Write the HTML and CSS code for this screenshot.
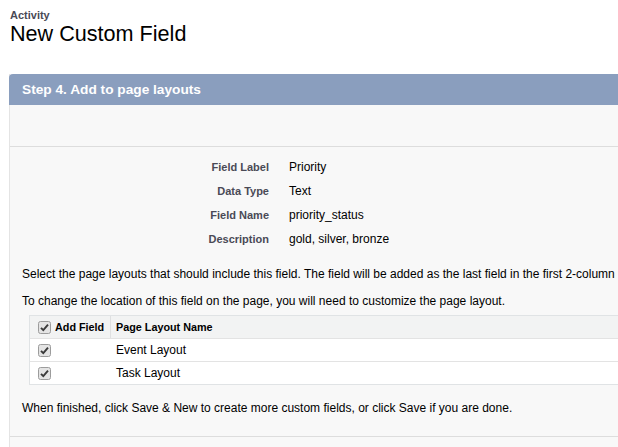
FILE: index.html
```html
<!DOCTYPE html>
<html>
<head>
<meta charset="utf-8">
<link rel="stylesheet" href="styles.css">
</head>
<body>
<div class="page-head">
  <div class="page-type">Activity</div>
  <h1 class="page-title">New Custom Field</h1>
</div>
<div class="panel">
  <div class="panel-header">Step 4. Add to page layouts</div>
  <div class="panel-blank"></div>
  <div class="panel-body">
    <div class="detail-grid">
      <div class="d-label">Field Label</div><div class="d-value">Priority</div>
      <div class="d-label">Data Type</div><div class="d-value">Text</div>
      <div class="d-label">Field Name</div><div class="d-value">priority_status</div>
      <div class="d-label">Description</div><div class="d-value">gold, silver, bronze</div>
    </div>
    <p class="note first">Select the page layouts that should include this field. The field will be added as the last field in the first 2-column section of these page layouts.</p>
    <p class="note second">To change the location of this field on the page, you will need to customize the page layout.</p>
    <div class="layout-table">
      <div class="lt-row lt-head">
        <div class="lt-c1"><span class="cb"><svg width="13" height="13" viewBox="0 0 13 13"><rect x="0.5" y="0.5" width="12" height="12" rx="2" fill="#e4e4e4" stroke="#9c9c9c"/><path d="M3 6.8 L5.3 9.2 L10 3.6" fill="none" stroke="#3a3a3a" stroke-width="1.9"/></svg></span>Add Field</div>
        <div class="lt-c2">Page Layout Name</div>
      </div>
      <div class="lt-row">
        <div class="lt-c1"><span class="cb"><svg width="13" height="13" viewBox="0 0 13 13"><rect x="0.5" y="0.5" width="12" height="12" rx="2" fill="#e4e4e4" stroke="#9c9c9c"/><path d="M3 6.8 L5.3 9.2 L10 3.6" fill="none" stroke="#3a3a3a" stroke-width="1.9"/></svg></span></div>
        <div class="lt-c2">Event Layout</div>
      </div>
      <div class="lt-row">
        <div class="lt-c1"><span class="cb"><svg width="13" height="13" viewBox="0 0 13 13"><rect x="0.5" y="0.5" width="12" height="12" rx="2" fill="#e4e4e4" stroke="#9c9c9c"/><path d="M3 6.8 L5.3 9.2 L10 3.6" fill="none" stroke="#3a3a3a" stroke-width="1.9"/></svg></span></div>
        <div class="lt-c2">Task Layout</div>
      </div>
    </div>
    <p class="note finish">When finished, click Save &amp; New to create more custom fields, or click Save if you are done.</p>
  </div>
  <div class="panel-foot"></div>
</div>
</body>
</html>
```
FILE: styles.css
```css
html, body {
  margin: 0;
  padding: 0;
  background: #ffffff;
  font-family: "Liberation Sans", Arial, sans-serif;
  color: #000;
  overflow: hidden;
}
.page-head {
  padding: 9px 0 0 10px;
}
.page-type {
  font-size: 11px;
  line-height: 13px;
  font-weight: bold;
  color: #4a4a56;
}
.page-title {
  margin: 0;
  font-size: 21.6px;
  line-height: 24px;
  font-weight: normal;
  color: #000;
}
.panel {
  margin: 28px 0 0 9px;
  width: 760px;
  background: #f8f8f8;
  border-left: 1px solid #e4e4e4;
}
.panel-header {
  height: 31px;
  line-height: 31px;
  margin-left: -1px;
  padding-left: 13px;
  background: #8a9ebe;
  border-radius: 4px 4px 0 0;
  color: #fff;
  font-weight: bold;
  font-size: 13.7px;
}
.panel-blank {
  height: 41px;
  border-bottom: 1px solid #dddddd;
}
.panel-body {
  padding: 8px 0 20px 0;
  border-bottom: 1px solid #dddddd;
}
.detail-grid {
  display: grid;
  grid-template-columns: 259px auto;
  grid-auto-rows: 24px;
  column-gap: 20px;
  align-items: center;
}
.d-label {
  text-align: right;
  font-size: 11px;
  font-weight: bold;
  color: #4a4a56;
}
.d-value {
  font-size: 12px;
}
.note {
  margin: 0;
  padding-left: 12px;
  font-size: 12px;
  line-height: 16px;
  white-space: nowrap;
}
.note.first { margin-top: 15px; }
.note.second { margin-top: 11px; }
.note.finish { margin-top: 15px; }
.layout-table {
  margin: 6px 0 0 19px;
  border: 1px solid #e0e3e5;
  background: #fff;
}
.lt-row {
  display: flex;
  height: 22px;
  align-items: center;
  border-bottom: 1px solid #e3e3e3;
  font-size: 12px;
}
.lt-row:last-child { border-bottom: none; }
.lt-head {
  background: #f2f3f3;
  font-weight: bold;
  font-size: 10.8px;
}
.lt-c1 {
  width: 72px;
  padding-left: 8px;
  display: flex;
  align-items: center;
  height: 100%;
}
.lt-head .lt-c1 {
  border-right: 1px solid #dfe0e1;
}
.lt-c2 {
  padding-left: 5px;
}
.lt-head .lt-c2 { padding-left: 5px; }
.lt-row:not(.lt-head) .lt-c2 { padding-left: 5px; }
.lt-row:not(.lt-head) .lt-c1 { border-right: 1px solid transparent; }
.cb {
  display: inline-flex;
  width: 13px;
  height: 13px;
  margin-right: 4px;
}
.panel-foot {
  height: 20px;
}
```
